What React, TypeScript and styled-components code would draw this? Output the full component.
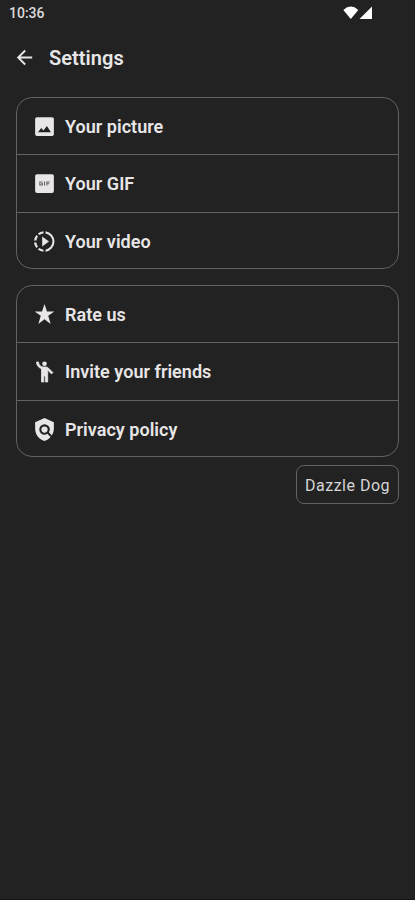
import React from "react";
import styled, { createGlobalStyle } from "styled-components";
import { MdArrowBack, MdPolicy } from "react-icons/md";

const GlobalStyle = createGlobalStyle`
  * { box-sizing: border-box; }
  body { margin: 0; background: #222222; }
`;

const Screen = styled.div`
  display: flex;
  flex-direction: column;
  height: 900px;
  background: #222222;
  color: #e8e6e7;
  font-family: Roboto, sans-serif;
  border-bottom: 1px solid #171215;
`;

const StatusBar = styled.div`
  display: flex;
  justify-content: space-between;
  align-items: center;
  height: 26px;
  padding: 0 42px 0 9px;
`;

const Clock = styled.span`
  font-size: 14px;
  font-weight: 500;
  line-height: 26px;
  color: #dddbdc;
`;

const Header = styled.header`
  display: flex;
  align-items: center;
  height: 64px;
  padding: 0 13px;
  gap: 13px;
  svg { display: block; margin-bottom: 2px; }
`;

const Title = styled.h1`
  margin: 0;
  font-size: 20px;
  font-weight: 600;
  line-height: 24px;
  letter-spacing: 0.05px;
`;

const Content = styled.main`
  display: flex;
  flex-direction: column;
  padding: 7px 16px 0;
`;

const Card = styled.section`
  display: grid;
  grid-template-rows: 56px 58px 56px;
  height: 172px;
  border: 1px solid #626262;
  border-radius: 16px;
  & + & { margin-top: 16px; }
`;

const Row = styled.div`
  display: flex;
  align-items: center;
  padding-left: 15px;
  gap: 8px;
  & + & { border-top: 1px solid #626262; }
  &:first-child { padding-top: 1px; }
  &:last-child { padding-top: 2px; }
`;

const IconSlot = styled.span`
  display: flex;
  align-items: center;
  justify-content: center;
  width: 25px;
  height: 25px;
`;

const Label = styled.span`
  padding-top: 1px;
  font-size: 18px;
  font-weight: 600;
  line-height: 24px;
  letter-spacing: 0.03px;
  white-space: nowrap;
`;

const Tag = styled.button`
  align-self: flex-end;
  width: 103px;
  height: 39px;
  margin-top: 8px;
  padding: 2px 0 0;
  border: 1px solid #626262;
  border-radius: 8px;
  background: transparent;
  color: #d6d4d5;
  font: 400 16px/24px Roboto, sans-serif;
  letter-spacing: 0.5px;
  white-space: nowrap;
`;

const PictureIcon = () => (
  <svg width="25" height="25" viewBox="0 0 24 24">
    <rect x="3" y="3" width="18" height="18" rx="1.8" fill="#e8e6e7" />
    <path d="M5.8 17.4 8.8 13.5l2.2 2.4 3.3-4.4L18.2 17.4z" fill="#222222" />
  </svg>
);

const GifIcon = () => (
  <svg width="25" height="25" viewBox="0 0 24 24">
    <rect x="3" y="3" width="18" height="18" rx="1.8" fill="#e8e6e7" />
    <path d="M10 10.5H7.5v3H10v-1.4H9M12 10v4M14.2 14v-3.5H17M14.2 12.2h2.2" fill="none" stroke="#666465" strokeWidth="1" />
  </svg>
);

const VideoIcon = () => (
  <svg width="25" height="25" viewBox="0 0 24 24" fill="#e8e6e7">
    <path d="M9.8 7.3v9.4l6.5-4.7z" />
    <path d="M13 2.1v2.1a7.9 7.9 0 0 1 0 15.6v2.1a10 10 0 0 0 0-19.8z" />
    <path d="M11 2.1v2.1c-1.5.2-2.8.8-4 1.6L5.6 4.3A10 10 0 0 1 11 2.1zM5.7 7.1 4.3 5.7A10 10 0 0 0 2 11h2.2c.2-1.4.7-2.8 1.5-3.9zM4.2 13H2c.2 2 1 3.8 2.3 5.3l1.4-1.4A8 8 0 0 1 4.2 13zM5.6 19.7A10 10 0 0 0 11 21.9v-2.1c-1.5-.2-2.8-.8-4-1.6z" />
  </svg>
);

const StarIcon = () => (
  <svg width="25" height="25" viewBox="0 0 24 24" fill="#e8e6e7">
    <path d="M12 2 9.6 9H2.6l5.8 4.3L6.1 21 12 16.5 17.9 21l-2.3-7.7L21.4 9h-7z" />
  </svg>
);

const WavingIcon = () => (
  <svg width="25" height="24" viewBox="0 0 24 24" fill="#e8e6e7">
    <circle cx="12" cy="3.7" r="2.3" />
    <path d="M15.9 8.1C15.5 7.7 14.8 7 13.5 7H11C8.2 7 6 4.8 6 2H4c0 3.2 2.1 5.8 5 6.7V22h2.3v-6h1.6v6h2.3V10.1L19 14l1.4-1.4z" stroke="#e8e6e7" strokeWidth=".8" strokeLinejoin="round" />
  </svg>
);

const Signals = () => (
  <svg width="30" height="14" viewBox="0 0 30 14" fill="#ffffff">
    <path d="M.3 4Q7.8-2.8 15.3 4L7.8 13z" />
    <path d="M29 0.5V13H16.5z" />
  </svg>
);

const groups = [
  [
    { label: "Your picture", icon: <PictureIcon /> },
    { label: "Your GIF", icon: <GifIcon /> },
    { label: "Your video", icon: <VideoIcon /> },
  ],
  [
    { label: "Rate us", icon: <StarIcon /> },
    { label: "Invite your friends", icon: <WavingIcon /> },
    { label: "Privacy policy", icon: <MdPolicy size={25} /> },
  ],
];

export default function App() {
  return (
    <>
      <GlobalStyle />
      <Screen>
        <StatusBar>
          <Clock>10:36</Clock>
          <Signals />
        </StatusBar>
        <Header>
          <MdArrowBack size={23} />
          <Title>Settings</Title>
        </Header>
        <Content>
          {groups.map((rows, i) => (
            <Card key={i}>
              {rows.map((row) => (
                <Row key={row.label}>
                  <IconSlot>{row.icon}</IconSlot>
                  <Label>{row.label}</Label>
                </Row>
              ))}
            </Card>
          ))}
          <Tag>Dazzle Dog</Tag>
        </Content>
      </Screen>
    </>
  );
}
